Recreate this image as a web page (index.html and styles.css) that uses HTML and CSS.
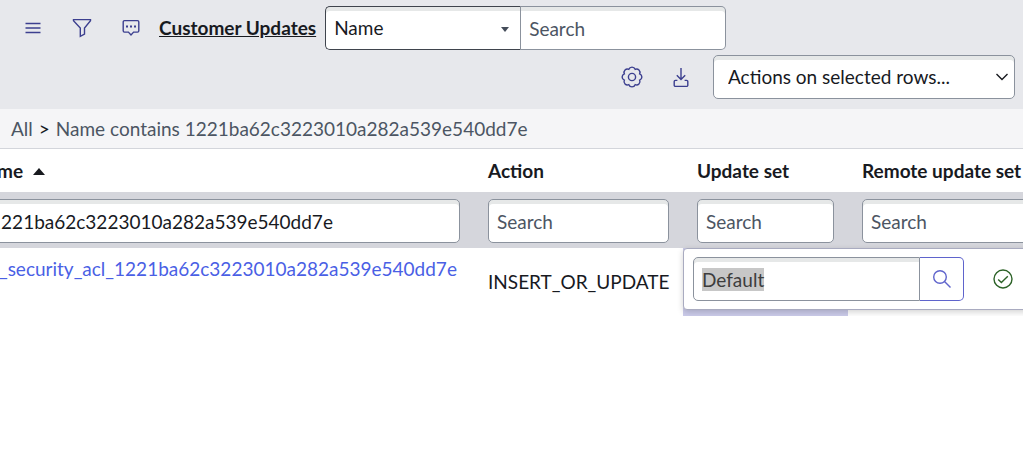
FILE: index.html
```html
<!DOCTYPE html>
<html lang="en">
<head>
<meta charset="utf-8">
<title>Customer Updates</title>
<link rel="stylesheet" href="styles.css">
</head>
<body>
<header class="toolbar">
  <div class="toolbar-row">
    <button class="icon-btn" aria-label="Menu">
      <svg width="18" height="18" viewBox="0 0 18 18"><path d="M1.5 4.5h15M1.5 9h15M1.5 13.5h15"/></svg>
    </button>
    <button class="icon-btn" aria-label="Filter">
      <svg width="20" height="20" viewBox="0 0 20 20"><path d="M1.5 1.6h17v1.2l-6 7.2v6.2l-4.2 2.2V10L1.5 2.8z"/></svg>
    </button>
    <button class="icon-btn" aria-label="Activity">
      <svg width="18" height="18" viewBox="0 0 18 18"><path d="M2.5 1.6h13a1.3 1.3 0 0 1 1.3 1.3v8.9a1.3 1.3 0 0 1-1.3 1.3h-3.9L9 16l-2.6-2.9H2.5a1.3 1.3 0 0 1-1.3-1.3V2.9a1.3 1.3 0 0 1 1.3-1.3z"/><path class="solid" d="M4 6.4h2v2H4zM8 6.4h2v2H8zM12 6.4h2v2h-2z"/></svg>
    </button>
    <h1 class="title"><a href="#">Customer Updates</a></h1>
    <div class="search-group">
      <div class="select-wrap">
        <select class="field field-select" aria-label="Search field"><option>Name</option></select>
        <svg class="select-arrow" width="8" height="5" viewBox="0 0 8 5"><path d="M0 0h8L4 5z"/></svg>
      </div>
      <input class="field field-query" type="text" placeholder="Search" aria-label="Search">
    </div>
  </div>
  <div class="toolbar-row toolbar-actions">
    <button class="icon-btn" aria-label="Settings">
      <svg width="22" height="22" viewBox="0 0 22 22"><path d="M18.67 7.82A3.4 3.4 0 0 1 18.67 14.18A3.4 3.4 0 0 1 14.18 18.67A3.4 3.4 0 0 1 7.82 18.67A3.4 3.4 0 0 1 3.33 14.18A3.4 3.4 0 0 1 3.33 7.82A3.4 3.4 0 0 1 7.82 3.33A3.4 3.4 0 0 1 14.18 3.33A3.4 3.4 0 0 1 18.67 7.82z"/><circle cx="11" cy="11" r="3.6"/></svg>
    </button>
    <button class="icon-btn" aria-label="Export">
      <svg width="18" height="22" viewBox="0 0 18 22"><path d="M9 2v11M4.8 9.2L9 13.4l4.2-4.2M5.4 14.4H3.4a1.2 1.2 0 0 0-1.2 1.2v3.6a1.2 1.2 0 0 0 1.2 1.2h11.2a1.2 1.2 0 0 0 1.2-1.2v-3.6a1.2 1.2 0 0 0-1.2-1.2h-2"/></svg>
    </button>
    <div class="select-wrap">
      <select class="field field-actions" aria-label="Actions"><option>Actions on selected rows...</option></select>
      <svg class="select-chevron" width="14" height="8" viewBox="0 0 14 8"><path d="M1.5 1L7 6.5 12.5 1"/></svg>
    </div>
  </div>
</header>
<nav class="breadcrumb" aria-label="Filter">
  <a href="#">All</a><span class="sep">&gt;</span><a href="#">Name contains 1221ba62c3223010a282a539e540dd7e</a>
</nav>
<main class="list">
  <table class="records">
    <colgroup><col class="col-name"><col class="col-action"><col class="col-set"><col></colgroup>
    <thead>
      <tr class="head">
        <th>Name<svg class="sort" width="12" height="7" viewBox="0 0 12 7"><path d="M0 7h12L6 0z"/></svg></th>
        <th>Action</th>
        <th>Update set</th>
        <th>Remote update set</th>
      </tr>
      <tr class="filters">
        <td><input class="field" type="text" value="*1221ba62c3223010a282a539e540dd7e" aria-label="Search name"></td>
        <td><input class="field" type="text" placeholder="Search" aria-label="Search action"></td>
        <td><input class="field" type="text" placeholder="Search" aria-label="Search update set"></td>
        <td><input class="field" type="text" placeholder="Search" aria-label="Search remote update set"></td>
      </tr>
    </thead>
    <tbody>
      <tr class="record">
        <td class="cell-name"><a href="#">sys_security_acl_1221ba62c3223010a282a539e540dd7e</a></td>
        <td>INSERT_OR_UPDATE</td>
        <td class="cell-active">
          <div class="editor">
            <input class="field editor-input" type="text" value="Default" aria-label="Update set">
            <button class="lookup" aria-label="Look up">
              <svg width="20" height="20" viewBox="0 0 20 20"><circle cx="8" cy="8" r="6.3"/><path d="M12.5 12.5l6 6"/></svg>
            </button>
            <button class="confirm" aria-label="Save">
              <svg width="20" height="20" viewBox="0 0 20 20"><circle cx="10" cy="10" r="9"/><path d="M5.2 10.4l3.2 3.2 6.4-6.4"/></svg>
            </button>
          </div>
        </td>
        <td></td>
      </tr>
    </tbody>
  </table>
</main>
<script src="script.js"></script>
</body>
</html>
```
FILE: styles.css
```css
* { box-sizing: border-box; }
body {
  margin: 0;
  background: #fff;
  color: #181a1f;
  font: 19px/24px Lato, "Liberation Sans", sans-serif;
}
button, input, select { font: inherit; color: inherit; }
a { color: inherit; text-decoration: none; }
svg { fill: none; stroke: currentColor; stroke-width: 1.4; }

.toolbar {
  display: flex;
  flex-direction: column;
  gap: 5px;
  padding: 6px 8px 10px;
  background: #e7e8ec;
}
.toolbar-row { display: flex; align-items: center; }
.toolbar-actions { justify-content: flex-end; }
.icon-btn {
  display: flex;
  align-items: center;
  justify-content: center;
  width: 49px;
  height: 44px;
  padding: 0;
  border: 0;
  background: none;
  color: #3c3f8f;
}
.icon-btn .solid { fill: currentColor; stroke: none; }
.title { margin: 0 9px 0 4px; font-size: 19px; font-weight: 700; }
.title a { text-decoration: underline; }

.field {
  display: block;
  width: 100%;
  height: 44px;
  padding: 0 8px;
  border: 1px solid #8b929d;
  border-radius: 5px;
  outline: 0;
  background: #fff;
  box-shadow: inset 0 4px #e6e8e8;
  appearance: none;
}
.field::placeholder { color: #4c5563; opacity: 1; }
.search-group { display: flex; }
.select-wrap { position: relative; }
.field-select {
  width: 196px;
  border-color: #3f444d;
  border-right-color: #8b929d;
  border-radius: 5px 0 0 5px;
}
.field-query { width: 205px; border-left: 0; border-radius: 0 5px 5px 0; }
.select-arrow {
  position: absolute;
  top: 21px;
  right: 12px;
  fill: #454d5a;
  stroke: none;
}
.field-actions { width: 302px; padding: 0 14px; }
.toolbar-actions .select-wrap { margin-left: 8px; }
.select-chevron { position: absolute; top: 18px; right: 6px; }

.breadcrumb {
  display: flex;
  gap: 6px;
  padding: 8px 11px 7px;
  border-bottom: 1px solid #d3d5db;
  background: #f5f5f7;
  color: #4c5563;
}
.sep { color: #181a1f; }

.list { overflow: hidden; }
.records {
  width: calc(100% + 60px);
  margin-left: -41px;
  border-collapse: collapse;
  table-layout: fixed;
}
.col-name { width: 515px; }
.col-action { width: 209px; }
.col-set { width: 165px; }
.records th, .records td { padding: 0 14px; text-align: left; white-space: nowrap; }
.head th { height: 43px; font-weight: 700; }
.sort { margin-left: 10px; vertical-align: 3px; fill: currentColor; stroke: none; }
.filters { background: #d5d6dc; }
.records .filters td { height: 56px; padding-top: 2px; }
.record td { height: 68px; }
.record .cell-name { padding-top: 9px; vertical-align: top; color: #4a5fe5; }
.record .cell-active {
  position: relative;
  padding: 0;
  background: #cbcbea;
}
.editor {
  position: absolute;
  top: 0;
  left: 0;
  display: flex;
  align-items: center;
  width: 380px;
  padding: 8px 9px;
  border: 1px solid #a9abc0;
  border-radius: 4px;
  background: #fff;
  box-shadow: 0 2px 6px rgba(0, 0, 0, .18);
}
.editor-input { width: 227px; border-radius: 5px 0 0 5px; color: #3d3d3d; }
.editor-input::selection { background: rgba(198, 198, 198, .99); color: #3d3d3d; }
.lookup, .confirm {
  display: flex;
  align-items: center;
  justify-content: center;
  width: 44px;
  height: 44px;
  padding: 0;
  border: 0;
  background: none;
}
.lookup { border: 1px solid #5f64cc; border-left: 0; border-radius: 0 5px 5px 0; color: #5f64cc; }
.confirm { margin-left: 17px; color: #2c6227; }
```
FILE: script.js
```js
const editorInput = document.querySelector(".editor-input");
editorInput.focus({ preventScroll: true });
editorInput.select();
```
